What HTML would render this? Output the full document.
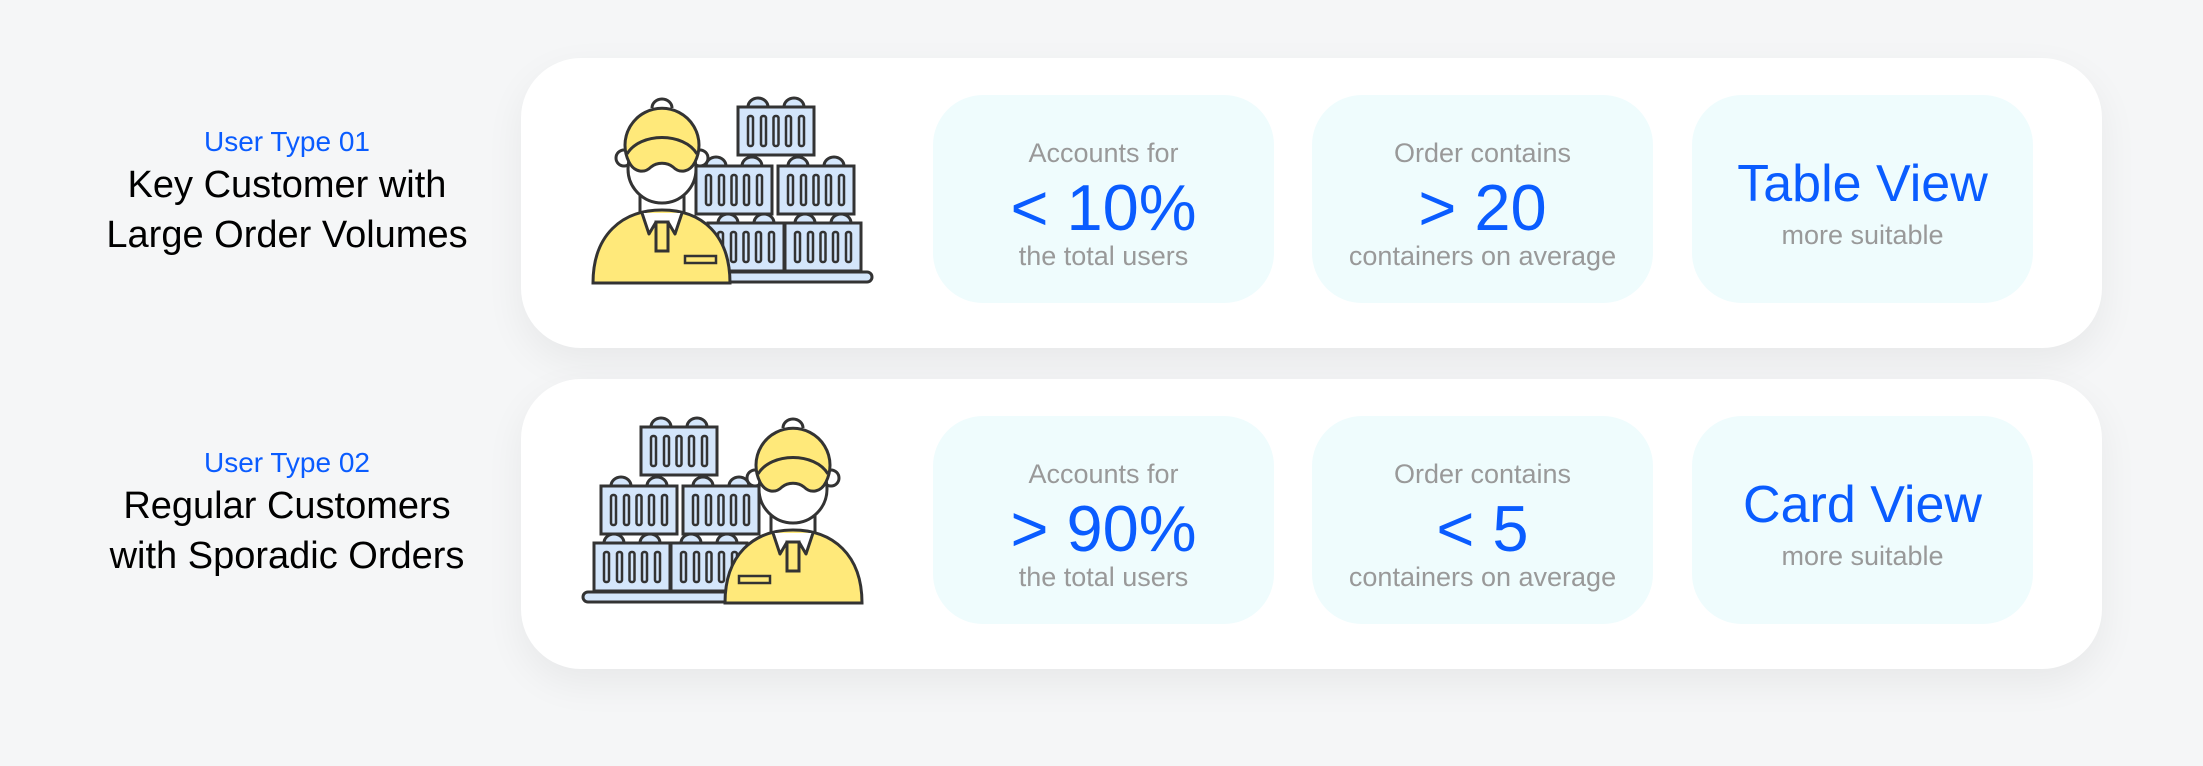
<!DOCTYPE html>
<html><head><meta charset="utf-8"><style>
body{margin:0;width:2203px;height:766px;background:#f5f6f7;font-family:"Liberation Sans",sans-serif;position:relative;overflow:hidden}
.card{position:absolute;left:521px;width:1581px;height:290px;background:#fff;border-radius:60px;box-shadow:0 14px 40px rgba(0,0,0,0.06)}
.lab{position:absolute;left:37px;width:500px;text-align:center}
.ut{color:#0a5cff;font-size:28px;line-height:32px}
.tt{color:#000;font-size:38px;line-height:50px;margin-top:2px}
.m{position:absolute;width:341px;height:208px;background:#effcfd;border-radius:50px;text-align:center}
.s{color:#999;font-size:27px;line-height:30px;position:absolute;left:0;right:0}
.b{color:#0a5cff;font-size:65px;line-height:70px;position:absolute;left:0;right:0}
.v{color:#0a5cff;font-size:52px;line-height:56px;position:absolute;left:0;right:0}
svg{position:absolute}
</style></head><body>
<div class="card" style="top:58px"></div>
<div class="card" style="top:379px"></div>

<div class="lab" style="top:126px"><div class="ut">User Type 01</div><div class="tt">Key Customer with<br>Large Order Volumes</div></div>
<div class="lab" style="top:447px"><div class="ut">User Type 02</div><div class="tt">Regular Customers<br>with Sporadic Orders</div></div>

<svg width="0" height="0" style="position:absolute">
<defs>
<g id="ct">
<path d="M-28,0 a10,9 0 0 1 20,0 M8,0 a10,9 0 0 1 20,0" fill="#d4e6fb" stroke="#333" stroke-width="3"/>
<rect x="-38" y="0" width="76" height="48" fill="#d4e6fb" stroke="#333" stroke-width="3"/>
<g fill="none" stroke="#333" stroke-width="2.5">
<rect x="-28" y="9" width="5" height="30" rx="2"/><rect x="-15" y="9" width="5" height="30" rx="2"/><rect x="-2.5" y="9" width="5" height="30" rx="2"/><rect x="10" y="9" width="5" height="30" rx="2"/><rect x="23" y="9" width="5" height="30" rx="2"/>
</g></g>
<g id="ill">
<rect x="160" y="202" width="152" height="10" rx="5" fill="#d4e6fb" stroke="#333" stroke-width="3"/>
<use href="#ct" x="186" y="153"/>
<use href="#ct" x="263" y="153"/>
<use href="#ct" x="174" y="96"/>
<use href="#ct" x="256" y="96"/>
<use href="#ct" x="216" y="37"/>
<g stroke="#333" stroke-width="3">
<path d="M92,38 a10,9 0 0 1 20,0" fill="#fff"/>
<circle cx="64" cy="88" r="8" fill="#fff"/><circle cx="140" cy="88" r="8" fill="#fff"/>
<rect x="80" y="120" width="44" height="32" fill="#fff"/>
<path d="M33,213 C33,165 62,140 102,140 C142,140 170,165 170,213 Z" fill="#ffe97a"/>
<path d="M82,143 L89,164 L96,152 L108,152 L115,164 L122,143" fill="#fff" stroke-linejoin="round"/>
<rect x="96" y="152" width="12" height="29" fill="#ffe97a"/>
<rect x="125" y="186" width="31" height="7" fill="#ffe97a" stroke-width="2.5"/>
<circle cx="102" cy="99" r="34" fill="#fff"/>
<path d="M69,92 A37,37 0 1 1 135,92 C130,102 120,104 113,97 C107,92 97,92 91,97 C84,104 74,102 69,92 Z" fill="#ffe97a"/>
<path d="M67,84 C80,62 124,62 137,84" fill="none"/>
</g>
</g>
</defs></svg>

<svg width="340" height="240" style="left:560px;top:70px" viewBox="0 0 340 240"><use href="#ill"/></svg>
<svg width="340" height="240" style="left:555px;top:390px" viewBox="0 0 340 240"><g transform="translate(340,0) scale(-1,1)"><use href="#ill"/></g></svg>

<div class="m" style="left:933px;top:95px"><div class="s" style="top:43px">Accounts for</div><div class="b" style="top:78px">&lt; 10%</div><div class="s" style="top:146px">the total users</div></div>
<div class="m" style="left:1312px;top:95px"><div class="s" style="top:43px">Order contains</div><div class="b" style="top:78px">&gt; 20</div><div class="s" style="top:146px">containers on average</div></div>
<div class="m" style="left:1692px;top:95px"><div class="v" style="top:61px">Table View</div><div class="s" style="top:125px">more suitable</div></div>

<div class="m" style="left:933px;top:416px"><div class="s" style="top:43px">Accounts for</div><div class="b" style="top:78px">&gt; 90%</div><div class="s" style="top:146px">the total users</div></div>
<div class="m" style="left:1312px;top:416px"><div class="s" style="top:43px">Order contains</div><div class="b" style="top:78px">&lt; 5</div><div class="s" style="top:146px">containers on average</div></div>
<div class="m" style="left:1692px;top:416px"><div class="v" style="top:61px">Card View</div><div class="s" style="top:125px">more suitable</div></div>
</body></html>
